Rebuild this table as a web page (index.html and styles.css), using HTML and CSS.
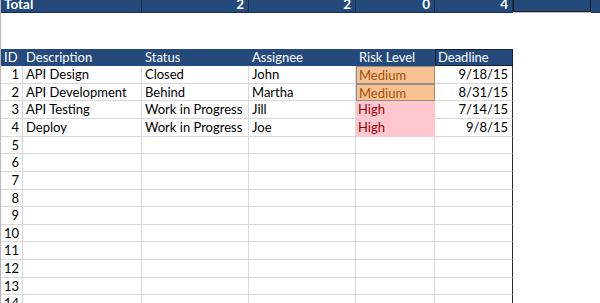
FILE: index.html
```html
<!DOCTYPE html>
<html>
<head>
<meta charset="utf-8">
<link rel="stylesheet" href="styles.css">
</head>
<body>
<div class="sheet">
  <div class="row total">
    <div class="c span2 bold">Total</div>
    <div class="c num bold">2</div>
    <div class="c num bold">2</div>
    <div class="c num bold">0</div>
    <div class="c num bold">4</div>
    <div class="c extra"></div>
  </div>
  <div class="gap"></div>
  <div class="row head">
    <div class="c">ID</div>
    <div class="c">Description</div>
    <div class="c">Status</div>
    <div class="c">Assignee</div>
    <div class="c">Risk Level</div>
    <div class="c deadline-h">Deadline</div>
  </div>
  <div class="row data">
    <div class="c num">1</div><div class="c">API Design</div><div class="c">Closed</div><div class="c">John</div><div class="c risk medium">Medium</div><div class="c num dl">9/18/15</div>
  </div>
  <div class="row data">
    <div class="c num">2</div><div class="c">API Development</div><div class="c">Behind</div><div class="c">Martha</div><div class="c risk medium">Medium</div><div class="c num dl">8/31/15</div>
  </div>
  <div class="row data">
    <div class="c num">3</div><div class="c">API Testing</div><div class="c">Work in Progress</div><div class="c">Jill</div><div class="c risk high">High</div><div class="c num dl">7/14/15</div>
  </div>
  <div class="row data">
    <div class="c num">4</div><div class="c">Deploy</div><div class="c">Work in Progress</div><div class="c">Joe</div><div class="c risk high">High</div><div class="c num dl">9/8/15</div>
  </div>
  <div class="row data"><div class="c num">5</div><div class="c"></div><div class="c"></div><div class="c"></div><div class="c"></div><div class="c dl"></div></div>
  <div class="row data"><div class="c num">6</div><div class="c"></div><div class="c"></div><div class="c"></div><div class="c"></div><div class="c dl"></div></div>
  <div class="row data"><div class="c num">7</div><div class="c"></div><div class="c"></div><div class="c"></div><div class="c"></div><div class="c dl"></div></div>
  <div class="row data"><div class="c num">8</div><div class="c"></div><div class="c"></div><div class="c"></div><div class="c"></div><div class="c dl"></div></div>
  <div class="row data"><div class="c num">9</div><div class="c"></div><div class="c"></div><div class="c"></div><div class="c"></div><div class="c dl"></div></div>
  <div class="row data"><div class="c num">10</div><div class="c"></div><div class="c"></div><div class="c"></div><div class="c"></div><div class="c dl"></div></div>
  <div class="row data"><div class="c num">11</div><div class="c"></div><div class="c"></div><div class="c"></div><div class="c"></div><div class="c dl"></div></div>
  <div class="row data"><div class="c num">12</div><div class="c"></div><div class="c"></div><div class="c"></div><div class="c"></div><div class="c dl"></div></div>
  <div class="row data"><div class="c num">13</div><div class="c"></div><div class="c"></div><div class="c"></div><div class="c"></div><div class="c dl"></div></div>
  <div class="row data"><div class="c num">14</div><div class="c"></div><div class="c"></div><div class="c"></div><div class="c"></div><div class="c dl"></div></div>
</div>
</body>
</html>
```

FILE: styles.css
```css
html, body {
  margin: 0;
  padding: 0;
  background: #ffffff;
  overflow: hidden;
}
body {
  width: 600px;
  height: 303px;
  font-family: Lato, "Liberation Sans", sans-serif;
  font-size: 13px;
  color: #000;
}
.sheet {
  border-left: 1px solid #b8b8b8;
  height: 303px;
  box-sizing: border-box;
  overflow: hidden;
}
.row {
  display: grid;
  grid-template-columns: 22px 119px 107px 107px 79px 78px;
  height: 17.64px;
  box-sizing: border-box;
}
.c {
  box-sizing: border-box;
  padding: 0 3px;
  white-space: nowrap;
  overflow: hidden;
  line-height: 16px;
}
.num { text-align: right; }
.bold { font-weight: 700; }

/* Total row (scrolled, partially visible) */
.total {
  grid-template-columns: 141px 107px 107px 79px 78px 78px;
  height: 13.3px;
  background: #234a7b;
  color: #fff;
  border-bottom: 1px solid #17304f;
}
.total .c {
  border-right: 1px solid #17304f;
  height: 100%;
  line-height: 13px;
  display: flex;
  align-items: flex-end;
  padding-bottom: 1.5px;
  font-size: 13.5px;
}
.total .c.num { justify-content: flex-end; padding-right: 4px; }
.total .extra {
  border: 1px solid #1b1b1b;
  border-top: none;
  box-shadow: 0 1px 0 #bdbdbd;
}
.gap {
  height: 35.3px;
}

/* Header */
.head {
  background: #234a7b;
  color: #fff;
  width: 512px;
}
.head .c { line-height: 17.6px; }
.head .deadline-h {
  border: 1px solid #151f2e;
  line-height: 15.6px;
  padding-left: 2px;
}

/* Data rows */
.data .c {
  border-right: 1px solid #d9d9d9;
  border-bottom: 1px solid #d9d9d9;
  line-height: 16.6px;
}
.data .c.dl {
  border-right: 1px solid #2a2a2a;
  padding-right: 4px;
}
.risk { padding-left: 2px; }
.medium {
  background: #f9c18f;
  color: #a0520f;
  border: 1px solid #8f8f8f;
}
.data .c.medium {
  border-right: 1px solid #8f8f8f;
  border-bottom: 1px solid #8f8f8f;
}
.high {
  background: #ffc7ce;
  color: #9c0006;
}
.data .c.high {
  border-right-color: #ffc7ce;
  border-bottom-color: #ffc7ce;
}
```
